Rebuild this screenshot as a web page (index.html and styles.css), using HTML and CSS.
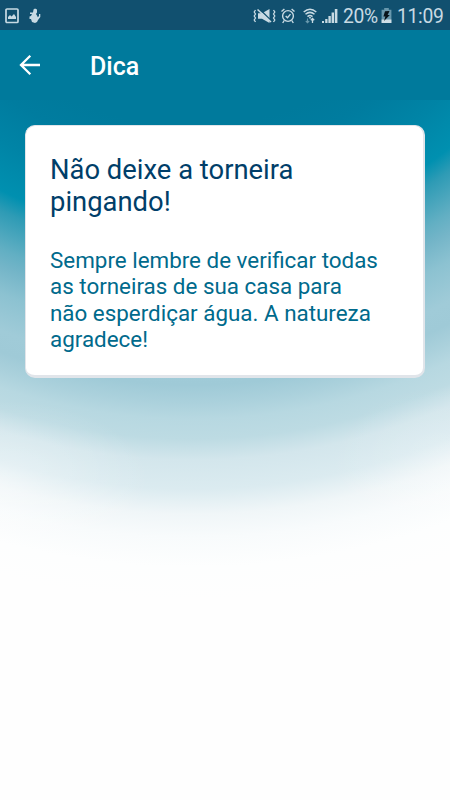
FILE: index.html
```html
<!DOCTYPE html>
<html lang="pt-BR">
<head>
<meta charset="utf-8">
<title>Dica</title>
<link rel="stylesheet" href="styles.css">
</head>
<body>
<div class="screen">
  <div class="status">
    <svg class="photo" width="14" height="16" viewBox="0 0 14 16"><rect x="1" y="1" width="12" height="13.5" rx="1" fill="none" stroke="currentColor" stroke-width="1.7"/><path d="M3 11V9l2-2 1.5 1.5L9 6l2 3v2z" fill="currentColor"/></svg>
    <svg class="figure" width="12" height="16" viewBox="0 0 12 16"><path d="M4.5 1.5 6 .5l2 1v3L7 6l1 1.5.8 1.7L10 8V6h1.3v3L9 12l-1 2-2 1-3-1-1-3H.5V8.5L2 8l1-2H1V4.5h3z" fill="currentColor"/></svg>
    <span class="spacer"></span>
    <svg class="mute" width="24" height="16" viewBox="0 0 24 16"><path d="M5 5.3h4L16.5 1v14L9 10.7H5z" fill="currentColor"/><path d="M6 .5 19 13.5" stroke="#11506f" stroke-width="1.4"/><path d="M4.5 1.5 18 14" fill="none" stroke="currentColor" stroke-width="1.6"/><path d="M2.5 2l-1.3 2 1.3 2-1.3 2 1.3 2-1.3 2 1.3 2M20.5 2l1.3 2-1.3 2 1.3 2-1.3 2 1.3 2-1.3 2" fill="none" stroke="currentColor" stroke-width="1.3"/></svg>
    <svg class="alarm" width="14" height="16" viewBox="0 0 14 16"><g fill="none" stroke="currentColor" stroke-width="1.4"><circle cx="7" cy="8" r="5.4"/><path d="m4.7 8 1.8 1.8 3-3.7M.5 3.6 3.4 1M13.5 3.6l-2.9-2.6M3.2 12.5 1.7 15M10.8 12.5l1.5 2.5"/></g></svg>
    <svg class="wifi" width="14" height="16" viewBox="0 0 14 16"><g fill="none" stroke="currentColor" stroke-width="1.5"><path d="M.7 4Q7-1.5 13.3 4M2.5 6.3Q7 2.5 11.5 6.3M4.5 8.6Q7 6.3 9.5 8.6"/></g><path d="m5.8 9.5 1.2-.8 1.2.8L7 11z" fill="currentColor"/><path d="M9.5 15v-4M7.8 12.2l1.7-1.8 1.7 1.8" fill="none" stroke="currentColor" stroke-width="1.3"/><path d="M4.5 10.5v4M2.8 13l1.7 1.7L6.2 13" fill="none" stroke="#6998ad" stroke-width="1.1"/></svg>
    <svg class="signal" width="16" height="16" viewBox="0 0 16 16"><path d="M0 13h2v2H0zM3.2 11h2.3v4H3.2zM6.4 8h2.4v7H6.4zM9.6 4.5H12V15H9.6zM12.8 1h2.6v14h-2.6z" fill="currentColor"/></svg>
    <span class="percent">20%</span>
    <svg class="battery" width="11" height="16" viewBox="0 0 11 16"><path d="M3.2 0h4.6v1.7H10.4V15H.6V1.7h2.6z" fill="#6998ad"/><path d="M.6 11.5h9.8V15H.6z" fill="#d0dfe7"/><path d="M8.5 3 4 3.2 2.4 8.6h2L3 13l5.8-6H6.6z" fill="#08131a"/></svg>
    <span class="clock">11:09</span>
  </div>
  <header class="bar">
    <svg class="back" width="22" height="22" viewBox="0 0 22 22"><path d="M21 11H2.5M11.3 1.8 2 11l9.3 9.2" fill="none" stroke="#fff" stroke-width="2.3"/></svg>
    <h1>Dica</h1>
  </header>
  <main class="card">
    <h2>Não deixe a torneira pingando!</h2>
    <p>Sempre lembre de verificar todas as torneiras de sua casa para não esperdiçar água. A natureza agradece!</p>
  </main>
</div>
</body>
</html>
```
FILE: styles.css
```css
* { box-sizing: border-box; }
body { margin: 0; font-family: Roboto, "Liberation Sans", sans-serif; }
h1, h2, p { margin: 0; }
svg { display: block; flex: none; }
.screen {
  width: 450px;
  height: 800px;
  overflow: hidden;
  background:
    radial-gradient(ellipse 150px 80px at 0 480px, rgba(255,255,255,.35), rgba(255,255,255,0)),
    radial-gradient(ellipse 120px 80px at 450px 465px, rgba(255,255,255,.2), rgba(255,255,255,0)),
    radial-gradient(circle at 192px -185px,
    #007a9c 310px, #007c9f 338px, #0084a6 378px, #0090b0 421px, #2e9bb5 439px,
    #62afc3 474px, #74b5c8 490px, #8cc2d1 515px, #a0cbd8 550px, #9fcad7 570px, #abd1dc 588px,
    #b7d8e1 604px, #bddbe3 624px, #d3e6ec 645px, #dbebf0 674px, #f0f6f8 699px,
    #f8fbfc 722px, #fdfefe 752px, #fefefe 785px);
}
.status {
  height: 30px;
  display: flex;
  align-items: center;
  padding: 2px 6px 0 5px;
  background: #11506f;
  color: #c8dae3;
  line-height: 26px;
  white-space: nowrap;
}
.figure { margin-left: 10px; }
.spacer { flex: 1; }
.alarm { margin-left: 4px; }
.wifi { margin-left: 8px; }
.signal { margin-left: 5px; }
.percent, .clock { margin-top: 2px; font-size: 19.3px; letter-spacing: -.3px; }
.percent { width: 35px; margin-left: 5px; }
.battery { margin-left: 3px; }
.clock { width: 47px; margin-left: 5px; }
.bar {
  height: 70px;
  display: flex;
  align-items: center;
  padding-left: 19px;
  background: #007a9c;
}
.bar h1 {
  margin: 3px 0 0 49px;
  color: #fff;
  font-size: 25px;
  font-weight: 500;
  line-height: 30px;
}
.card {
  width: 400px;
  height: 253px;
  margin: 25px 0 0 25px;
  padding: 28px 20px 0 24px;
  border: 1px solid #e1e5ea;
  border-width: 1px 2px 3px 1px;
  border-radius: 10px;
  background: #fff;
}
.card h2 {
  color: #003e69;
  font-size: 27.4px;
  font-weight: 400;
  line-height: 32px;
}
.card p {
  width: 332px;
  margin-top: 29px;
  color: #006a8c;
  font-size: 22.4px;
  line-height: 26.3px;
}
```
